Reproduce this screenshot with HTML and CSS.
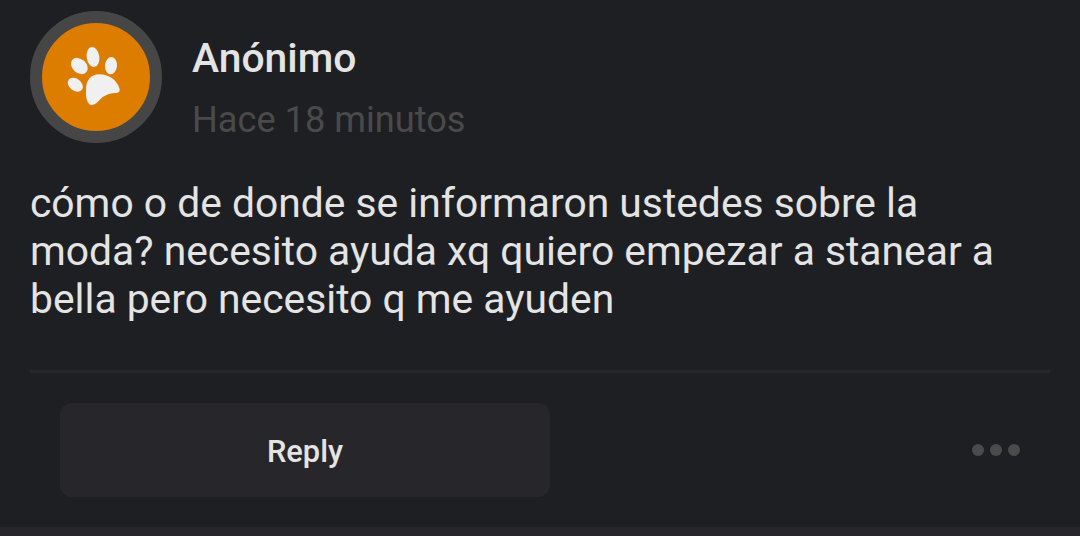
FILE: index.html
```html
<!DOCTYPE html>
<html lang="es">
<head>
  <meta charset="UTF-8">
  <meta name="viewport" content="width=device-width, initial-scale=1">
  <title>Anónimo</title>

  <link rel="stylesheet" href="styles.css">
</head>

<body>

  <div class="post">
    <div class="post-header">
      <div class="avatar">
        <svg class="paw" viewBox="0 0 108 108">
          <g transform="translate(18 17) scale(0.3333)" fill="#f0f0f0">
            <ellipse cx="99" cy="51" rx="19" ry="30" transform="rotate(-9 99 51)" />
            <ellipse cx="58" cy="78" rx="28" ry="21" transform="rotate(42 58 78)" />
            <ellipse cx="153" cy="77" rx="18" ry="26" transform="rotate(4 153 77)" />
            <ellipse cx="46" cy="134" rx="25" ry="18" transform="rotate(38 46 134)" />
            <path d="M78 149 C79 121 91 104 118 103 C146 103 170 120 178 144 C181 154 177 159 166 159 C142 161 128 169 118 181 C112 189 104 195 96 195 C81 194 77 173 78 149 Z" />
          </g>
        </svg>
      </div>
      <div class="post-info">
        <div class="username">Anónimo</div>
        <div class="time">Hace 18 minutos</div>
      </div>
    </div>

    <p class="post-text">cómo o de donde se informaron ustedes sobre la moda? necesito ayuda xq quiero empezar a stanear a bella pero necesito q me ayuden</p>

    <div class="post-footer">
      <button class="reply">Reply</button>
      <div class="more">
        <span></span>
        <span></span>
        <span></span>
      </div>
    </div>
  </div>

</body>
</html>
```
FILE: styles.css
```css
body {
  font-family: Roboto, sans-serif;
  margin: 0;
  padding: 0;
  background: #27262b;
  color: #e4e4e4;
  height: 536px;
  overflow: hidden;
}

.post {
  box-sizing: border-box;
  height: 527px;
  padding: 11px 30px 0;
  background: #1e1f23;
}

.post-header {
  display: flex;
  height: 132px;
}

.avatar {
  box-sizing: border-box;
  width: 132px;
  height: 132px;
  border: 12px solid #464646;
  border-radius: 50%;
  background: #dd7d00;
}

.paw {
  display: block;
  width: 108px;
  height: 108px;
}

.post-info {
  margin-left: 30px;
  padding-top: 23px;
}

.username {
  font-size: 40.8px;
  font-weight: 500;
  line-height: 48px;
}

.time {
  margin-top: 16px;
  font-size: 36.2px;
  line-height: 43px;
  color: #4a4a4a;
}

.post-text {
  margin: 36px 0 0;
  font-size: 40.8px;
  line-height: 48px;
}

.post-footer {
  display: flex;
  justify-content: space-between;
  align-items: center;
  margin-top: 47px;
  padding: 30px 30px 0;
  border-top: 3px solid #27272b;
}

.reply {
  width: 490px;
  height: 94px;
  padding: 2px 0 0;
  border: none;
  border-radius: 12px;
  background: #27262b;
  color: #e4e4e4;
  font-family: inherit;
  font-size: 30.8px;
  font-weight: 500;
  cursor: pointer;
}

.more {
  display: flex;
  gap: 6px;
}

.more span {
  width: 12px;
  height: 12px;
  border-radius: 50%;
  background: #4b4b4b;
}
```
